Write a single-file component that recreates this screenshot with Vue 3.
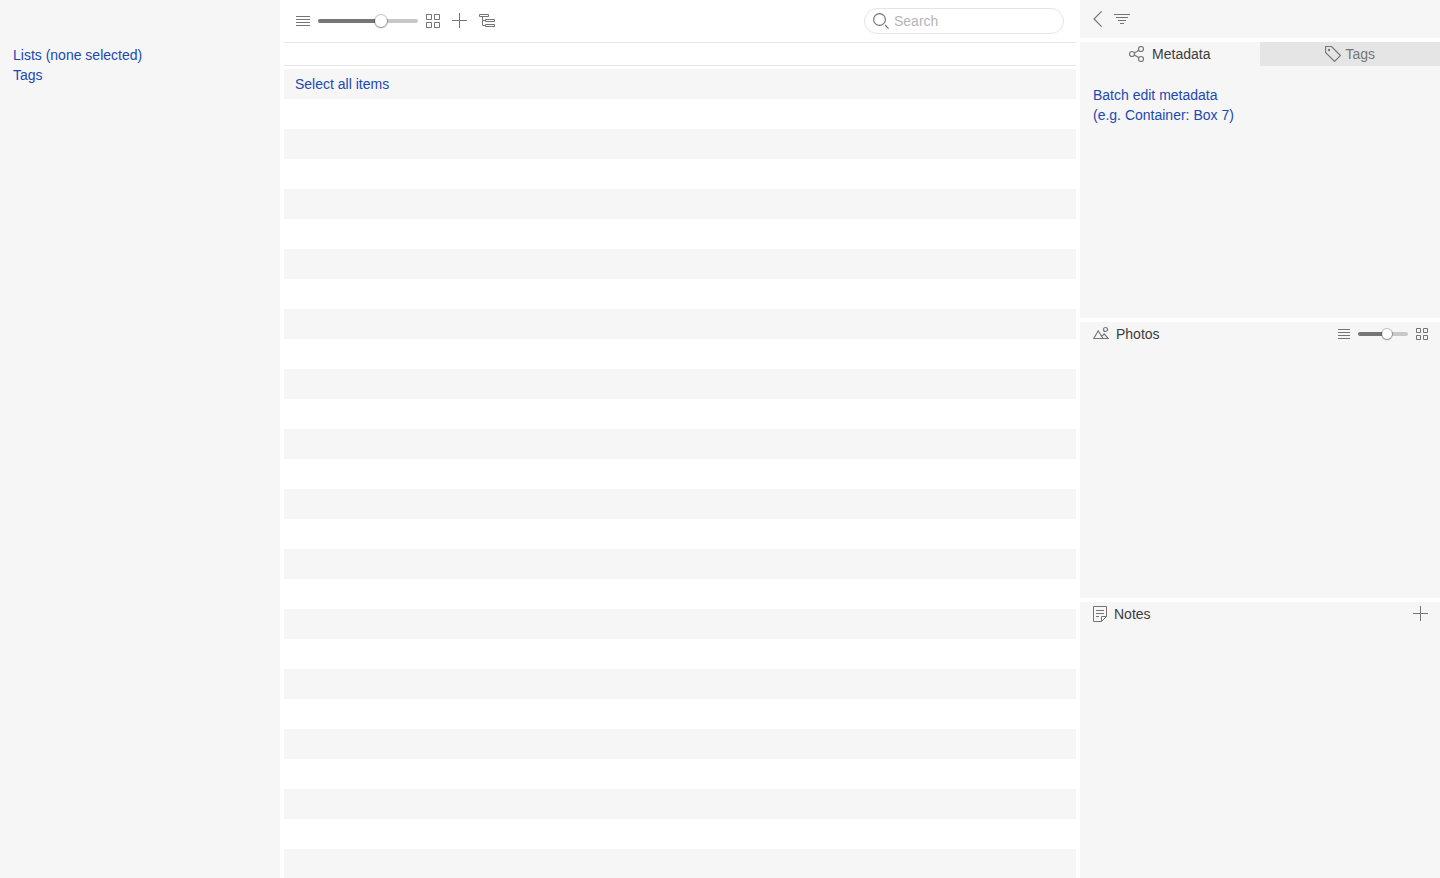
<script setup>
import { ref } from 'vue'

const itemZoom = ref(65)
const photoZoom = ref(60)
const query = ref('')
</script>

<template>
  <div class="project">
    <aside class="sidebar">
      <nav class="links">
        <a href="#lists">Lists (none selected)</a>
        <a href="#tags">Tags</a>
      </nav>
    </aside>

    <main class="items">
      <header class="toolbar">
        <div class="tools">
          <div class="zoom">
            <button type="button" class="icon-btn" aria-label="List view">
              <svg width="14" height="14" viewBox="0 0 14 14"><path d="M0 2.5H14M0 5.5H14M0 8.5H14M0 11.5H14" /></svg>
            </button>
            <input
              v-model="itemZoom"
              class="slider"
              type="range"
              min="0"
              max="100"
              aria-label="Item size"
              :style="{ '--fill': itemZoom + '%' }"
            />
            <button type="button" class="icon-btn" aria-label="Grid view">
              <svg width="14" height="14" viewBox="0 0 14 14"><path d="M.5 .5H5.5V5.5H.5ZM8.5 .5H13.5V5.5H8.5ZM.5 8.5H5.5V13.5H.5ZM8.5 8.5H13.5V13.5H8.5Z" /></svg>
            </button>
          </div>
          <button type="button" class="icon-btn" aria-label="New item">
            <svg width="15" height="16" viewBox="0 0 15 16"><path d="M0 7.5H15M7.5 0V15" /></svg>
          </button>
          <button type="button" class="icon-btn" aria-label="Nested lists">
            <svg width="16" height="14" viewBox="0 0 16 14"><path d="M.5 .5H9.5V2.5H.5ZM6.5 5.5H15.5V7.5H6.5ZM6.5 10.5H15.5V12.5H6.5ZM3.5 2.5V11.5H6.5M3.5 6.5H6.5" /></svg>
          </button>
        </div>
        <label class="search">
          <svg class="bold" width="16" height="16" viewBox="0 0 16 16"><circle cx="6.5" cy="6.5" r="5.9" /><path d="M12 12L15.6 15.6" /></svg>
          <input v-model="query" type="text" placeholder="Search" aria-label="Search" />
        </label>
      </header>
      <div class="columns-head"></div>
      <div class="rows">
        <a href="#all">Select all items</a>
      </div>
    </main>

    <aside class="inspector">
      <header class="panel-bar">
        <button type="button" class="icon-btn" aria-label="Back">
          <svg class="bold" width="9" height="16" viewBox="0 0 9 16"><path d="M8.6 .4L1 8L8.6 15.6" /></svg>
        </button>
        <button type="button" class="icon-btn" aria-label="Filter">
          <svg width="16" height="10" viewBox="0 0 16 10"><path d="M0 .5H16M2 3.5H14M4 6.5H12M6 9.5H10" /></svg>
        </button>
      </header>

      <section class="panel">
        <div class="tabs" role="tablist">
          <button type="button" class="tab metadata active" role="tab" aria-selected="true">
            <svg class="bold" width="16" height="16" viewBox="0 0 16 16"><circle cx="3" cy="8" r="2.5" /><circle cx="12" cy="3" r="2.5" /><circle cx="12" cy="13" r="2.5" /><path d="M5.3 7L8 5.5L9.7 4.3M5.3 9L8 10.5L9.7 11.7" /></svg>
            Metadata
          </button>
          <button type="button" class="tab tags" role="tab" aria-selected="false">
            <svg class="bold" width="16" height="16" viewBox="0 0 16 16"><path d="M.5 .5H6.5L15.4 9.6L9.6 15.4L.5 6.5Z" /><circle class="dot" cx="4" cy="4" r="1.2" /></svg>
            Tags
          </button>
        </div>
        <a class="batch" href="#batch">Batch edit metadata<br />(e.g. Container: Box 7)</a>
      </section>

      <section class="panel">
        <header class="panel-head">
          <h2 class="photos">
            <svg class="bold" width="16" height="16" viewBox="0 0 16 16"><path d="M9.8 12.5H.8L5.2 4.8L10 12.5H15.2L11.2 7.8L8.8 10.4" /><circle cx="12.5" cy="3.5" r="2" /></svg>
            Photos
          </h2>
          <div class="zoom">
            <button type="button" class="icon-btn" aria-label="Photo list">
              <svg width="12" height="12" viewBox="0 0 12 12"><path d="M0 1.5H12M0 4.5H12M0 7.5H12M0 10.5H12" /></svg>
            </button>
            <input
              v-model="photoZoom"
              class="slider small"
              type="range"
              min="0"
              max="100"
              aria-label="Photo size"
              :style="{ '--fill': photoZoom + '%' }"
            />
            <button type="button" class="icon-btn" aria-label="Photo grid">
              <svg width="12" height="12" viewBox="0 0 12 12"><path d="M.5 .5H4.5V4.5H.5ZM7.5 .5H11.5V4.5H7.5ZM.5 7.5H4.5V11.5H.5ZM7.5 7.5H11.5V11.5H7.5Z" /></svg>
            </button>
          </div>
        </header>
      </section>

      <section class="panel">
        <header class="panel-head">
          <h2>
            <svg width="14" height="16" viewBox="0 0 14 16"><path d="M.5 .5H13.5V10.5L8.5 15.5H.5ZM8.5 15.5V10.5H13.5M3 4.5H11M3 7.5H11M3 10.5H6" /></svg>
            Notes
          </h2>
          <button type="button" class="icon-btn" aria-label="New note">
            <svg width="15" height="16" viewBox="0 0 15 16"><path d="M0 7.5H15M7.5 0V15" /></svg>
          </button>
        </header>
      </section>
    </aside>
  </div>
</template>

<style>
body {
  margin: 0;
  background: #fff;
}
</style>

<style scoped>
.project {
  display: grid;
  grid-template-columns: 280px 1fr 360px;
  gap: 4px;
  min-height: 100vh;
  font: 14px/20px "Liberation Sans", Arial, sans-serif;
  color: #3c3c3c;
}

svg {
  display: block;
  flex: none;
  fill: none;
  stroke: #757575;
  stroke-width: 1;
}

svg.bold {
  stroke-width: 1.2;
}

a {
  color: #2148b2;
  text-decoration: none;
}

button {
  font: inherit;
  padding: 0;
  border: 0;
  background: none;
}

.icon-btn {
  display: block;
}

.sidebar {
  background: #f6f6f6;
}

.links {
  display: flex;
  flex-direction: column;
  padding: 45px 13px;
}

.items {
  display: flex;
  flex-direction: column;
}

.toolbar {
  display: flex;
  align-items: center;
  justify-content: space-between;
  height: 42px;
  padding: 0 12px;
  border-bottom: 1px solid #e5e5e5;
}

.tools,
.zoom {
  display: flex;
  align-items: center;
}

.tools {
  gap: 12px;
}

.zoom {
  gap: 8px;
}

.slider {
  appearance: none;
  width: 100px;
  height: 14px;
  margin: 0;
  background: none;
}

.slider.small {
  width: 50px;
}

.slider::-webkit-slider-runnable-track {
  height: 4px;
  border-radius: 2px;
  background: linear-gradient(to right, #757575 var(--fill), #c8c8c8 var(--fill));
}

.slider::-webkit-slider-thumb {
  appearance: none;
  width: 12px;
  height: 12px;
  margin-top: -4px;
  border-radius: 50%;
  background: #fff;
  box-shadow: 0 0 0 1px rgba(0, 0, 0, 0.2), 0 1px 2px rgba(0, 0, 0, 0.3);
}

.slider.small::-webkit-slider-thumb {
  width: 10px;
  height: 10px;
  margin-top: -3px;
}

.search {
  display: flex;
  align-items: center;
  gap: 5px;
  box-sizing: border-box;
  width: 200px;
  height: 26px;
  padding: 0 8px;
  border: 1px solid #e5e5e5;
  border-radius: 13px;
}

.search input {
  flex: 1;
  min-width: 0;
  padding: 0;
  border: 0;
  outline: 0;
  background: none;
  font: inherit;
  color: inherit;
}

.search input::placeholder {
  color: #b5b5b5;
}

.columns-head {
  height: 22px;
  border-bottom: 1px solid #e5e5e5;
}

.rows {
  flex: 1;
  margin-top: 3px;
  padding: 0 11px;
  line-height: 30px;
  background: repeating-linear-gradient(#f6f6f6 0 30px, #fff 30px 60px);
}

.inspector {
  display: flex;
  flex-direction: column;
  gap: 4px;
}

.panel-bar {
  display: flex;
  align-items: center;
  gap: 12px;
  height: 38px;
  padding: 0 13px;
  background: #f6f6f6;
}

.panel {
  flex: 1;
  background: #f6f6f6;
}

.tabs {
  display: flex;
  height: 24px;
}

.tab {
  flex: 1;
  display: flex;
  align-items: center;
  justify-content: center;
  color: #757575;
  background: #e5e5e5;
}

.tab.active {
  color: #3c3c3c;
  background: none;
}

.tab.metadata {
  gap: 7px;
}

.tab.tags {
  gap: 4px;
  padding-left: 1px;
}

.dot {
  fill: #757575;
  stroke: none;
}

.batch {
  display: block;
  padding: 19px 13px;
}

.panel-head {
  display: flex;
  align-items: center;
  justify-content: space-between;
  height: 24px;
  padding: 0 12px 0 13px;
}

.panel-head h2 {
  display: flex;
  align-items: center;
  gap: 7px;
  margin: 0;
  font-size: 14px;
  font-weight: 400;
}
</style>
